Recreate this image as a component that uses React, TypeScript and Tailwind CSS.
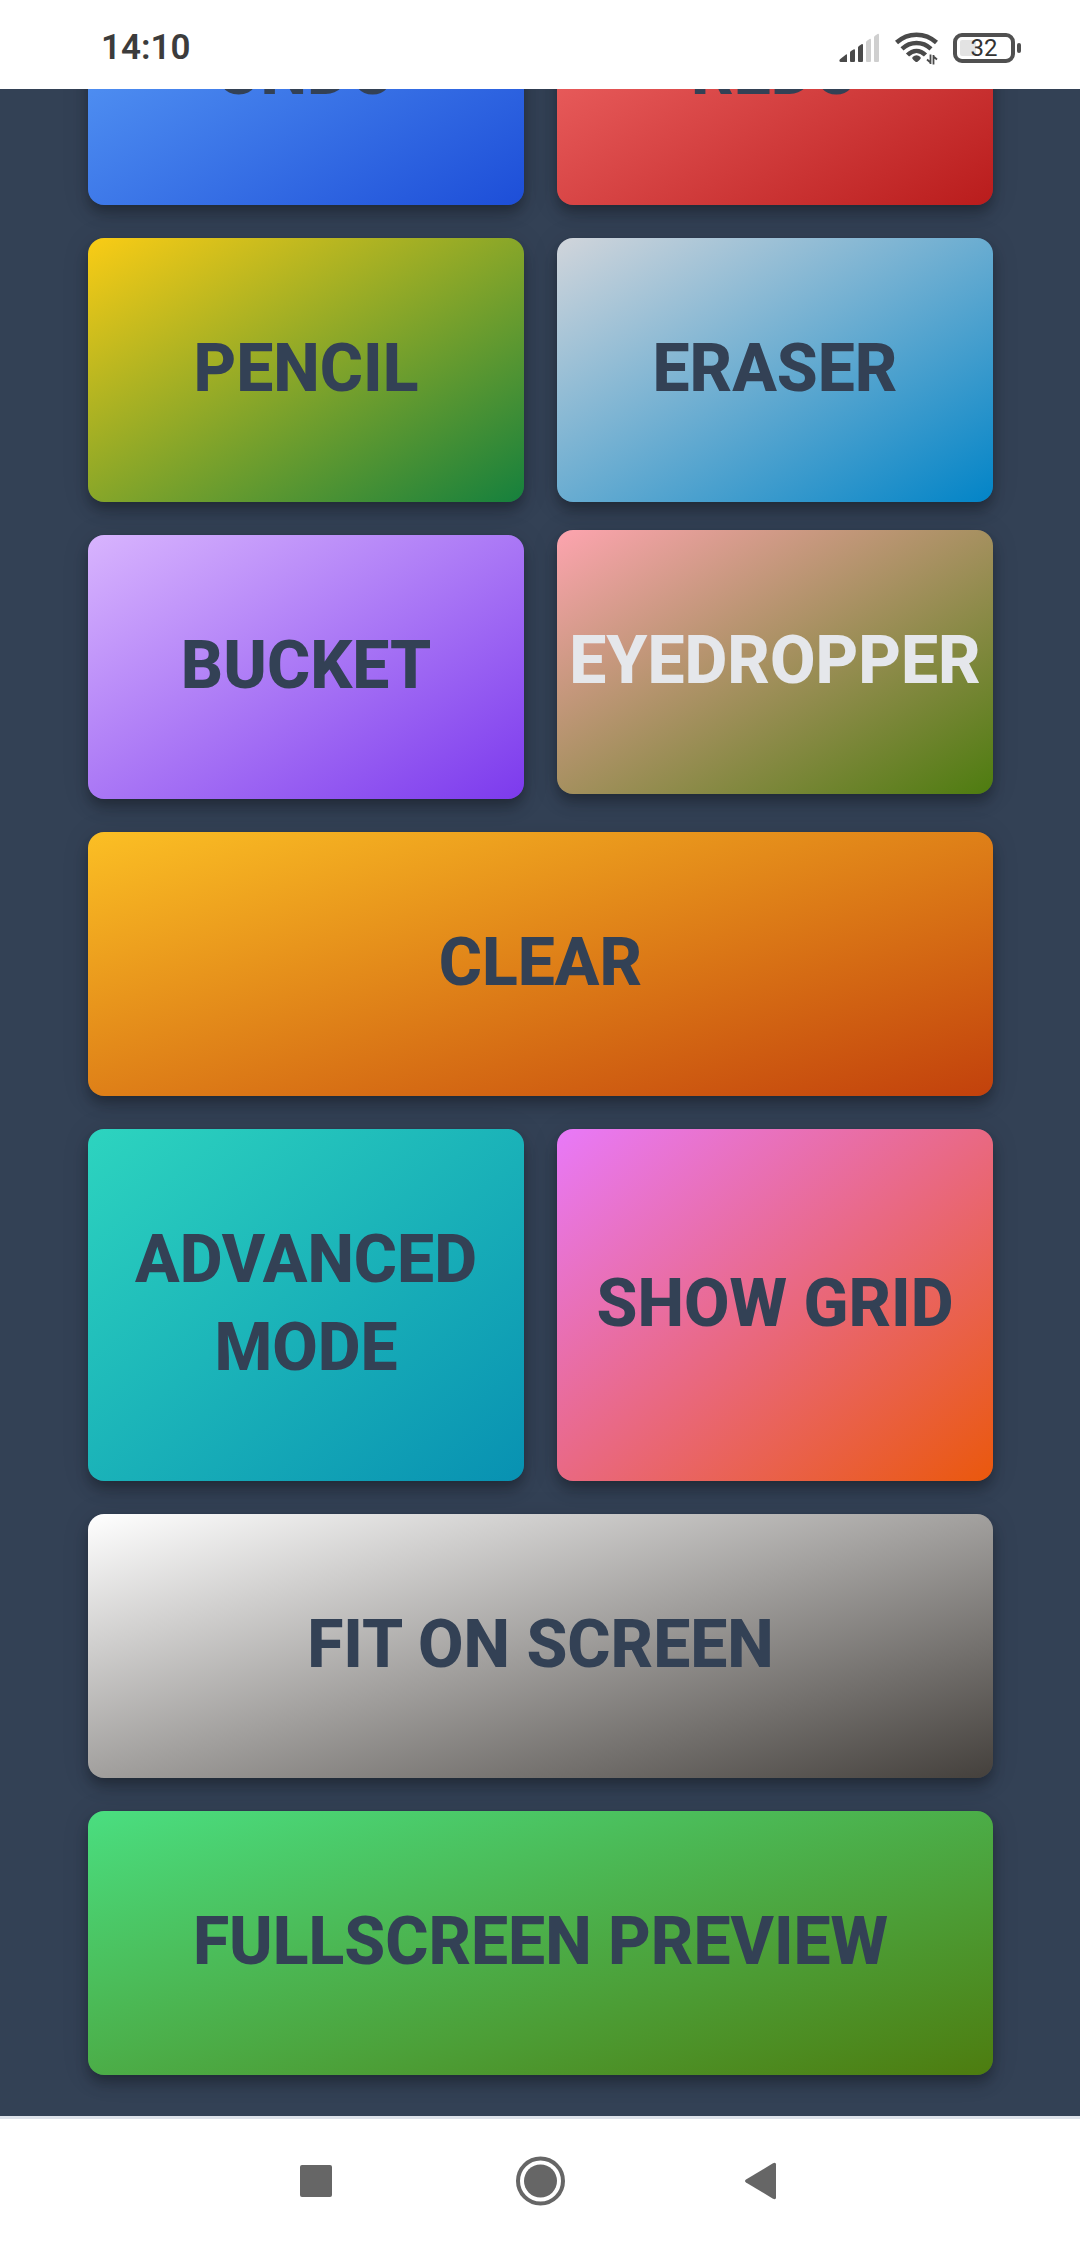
type Tool = {
  label: string;
  gradient: string;
  wide?: boolean;
  active?: boolean;
};

const tools: Tool[] = [
  { label: "UNDO", gradient: "from-[#60a5fa] to-[#1d4ed8]" },
  { label: "REDO", gradient: "from-[#f87171] to-[#b91c1c]" },
  { label: "PENCIL", gradient: "from-[#facc15] to-[#15803d]" },
  { label: "ERASER", gradient: "from-[#d1d5db] to-[#0284c7]" },
  { label: "BUCKET", gradient: "from-[#d8b4fe] to-[#7c3aed]" },
  { label: "EYEDROPPER", gradient: "from-[#fda4af] to-[#4d7c0f]", active: true },
  { label: "CLEAR", gradient: "from-[#fbbf24] to-[#c2410c]", wide: true },
  { label: "ADVANCED MODE", gradient: "from-[#2dd4bf] to-[#0891b2]" },
  { label: "SHOW GRID", gradient: "from-[#e879f9] to-[#ea580c]" },
  { label: "FIT ON SCREEN", gradient: "from-white to-[#44403c]", wide: true },
  { label: "FULLSCREEN PREVIEW", gradient: "from-[#4ade80] to-[#4d7c0f]", wide: true },
];

function ToolButton({ label, gradient, wide, active }: Tool) {
  return (
    <button
      type="button"
      aria-pressed={active}
      className={`rounded-2xl bg-linear-to-br/srgb px-2 pt-[87px] pb-[89px] text-center text-[66px] leading-[88px] font-extrabold shadow-[0_6px_11px_-3px_rgba(0,0,0,0.2),0_11px_14px_rgba(0,0,0,0.14),0_3px_28px_rgba(0,0,0,0.12)] ${gradient} ${wide ? "col-span-2" : ""} ${active ? "-translate-y-[5px] text-[#e5e7eb]" : "text-[#334155]"}`}
    >
      {label}
    </button>
  );
}

function SignalIcon() {
  return (
    <svg width="42" height="30" viewBox="0 0 42 30" aria-label="Mobile signal" role="img">
      <g fill="#4a4a4a">
        <path d="M7 21.500q1-.6 1 .5v7H1.500q-2-.8-.5-2.800z" />
        <path d="M11 19.500q0-1 1-1.500l2.500-1.500q1.500-.7 1.500 1V28q0 1-1 1h-3q-1 0-1-1z" />
        <path d="M19 14.500q0-1 1-1.600l2.500-1.700q1.500-.8 1.500 1V28q0 1-1 1h-3q-1 0-1-1z" />
      </g>
      <g fill="#cfcfcf">
        <path d="M27 9.500q0-1 1-1.700l2.500-1.900q1.500-.8 1.500 1V28q0 1-1 1h-3q-1 0-1-1z" />
        <path d="M35 4.500q0-1 1-1.700L38.500.9q1.500-.8 1.500 1V28q0 1-1 1h-3q-1 0-1-1z" />
      </g>
    </svg>
  );
}

function WifiIcon() {
  return (
    <svg width="44" height="34" viewBox="0 0 44 34" aria-label="Wi-Fi" role="img">
      <g fill="none" stroke="#4a4a4a" strokeWidth="4.500" strokeLinecap="butt">
        <path d="M1.500 11.500C13 1 30 1 41.500 11.500" />
        <path d="M7 17.800C15.500 10 27.500 10 36 17.800" />
        <path d="M12.500 24C18 18.500 25 18.500 30.500 24" />
      </g>
      <path d="M17.500 26q4-3.500 8 0q1 1.500-1 3l-2 1.700q-1 .8-2 0l-2-1.700q-2-1.500-1-3z" fill="#4a4a4a" />
      <path
        d="M35.500 23.500v9.500M35.500 31.500 32 28.500M38.500 33.500V24M38.500 25.500l3.500 3"
        fill="none"
        stroke="#4a4a4a"
        strokeWidth="1.800"
      />
    </svg>
  );
}

function Battery() {
  return (
    <div className="flex items-center gap-0.5" role="img" aria-label="Battery 32 percent">
      <div className="flex h-[30px] w-[62px] items-center justify-center rounded-[9px] border-4 border-[#505050] bg-linear-to-r from-[#e3e3e3] from-33% to-white to-33% bg-origin-content p-[3px] bg-clip-content text-[24px] leading-[24px] text-[#333]">
        32
      </div>
      <div className="h-2.5 w-1 rounded-sm bg-[#505050]" />
    </div>
  );
}

export default function App() {
  return (
    <div className="flex min-h-screen flex-col bg-[#334155] font-[Roboto,sans-serif]">
      <header className="relative z-10 flex h-[89px] items-center justify-between bg-white pt-1.5 pr-[59px] pl-[101px]">
        <time className="text-[35px] leading-10 font-semibold text-[#3c3c3c]">14:10</time>
        <div className="flex items-center gap-3.5">
          <SignalIcon />
          <WifiIcon />
          <Battery />
        </div>
      </header>

      <main className="flex-1 overflow-hidden pr-[87px] pb-[41px] pl-[88px]">
        <div className="-mt-[148px] grid grid-cols-2 gap-[33px]">
          {tools.map((tool) => (
            <ToolButton key={tool.label} {...tool} />
          ))}
        </div>
      </main>

      <nav
        aria-label="System navigation"
        className="flex h-[130px] items-center justify-center border-t-3 border-[#dde2ea] bg-white pb-1"
      >
        <button type="button" aria-label="Recent apps" className="flex w-56 justify-center">
          <svg width="50" height="50" viewBox="0 0 50 50" fill="#666">
            <rect x="9" y="9" width="32" height="32" rx="2" />
          </svg>
        </button>
        <button type="button" aria-label="Home" className="flex w-56 justify-center">
          <svg width="50" height="50" viewBox="0 0 50 50">
            <circle cx="25.500" cy="25" r="22.500" fill="none" stroke="#666" strokeWidth="4" />
            <circle cx="25.500" cy="25" r="16.500" fill="#666" />
          </svg>
        </button>
        <button type="button" aria-label="Back" className="flex w-56 justify-center">
          <svg width="50" height="50" viewBox="0 0 50 50" fill="#666">
            <path d="M7 23.500 34 7.300q3-1.300 3 1.200v33q0 2.500-3 1.200L7 26.500q-2-1.500 0-3z" />
          </svg>
        </button>
      </nav>
    </div>
  );
}
